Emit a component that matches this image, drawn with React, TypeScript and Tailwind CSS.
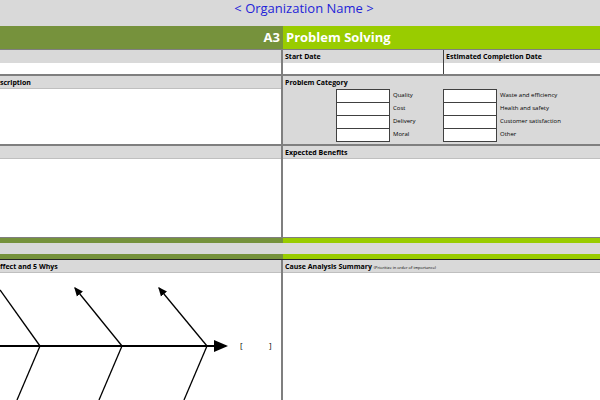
export default function App() {
  const f = { fontFamily: '"Open Sans","Noto Sans",sans-serif' };
  const cats1 = ["Quality", "Cost", "Delivery", "Moral"];
  const cats2 = ["Waste and efficiency", "Health and safety", "Customer satisfaction", "Other"];
  return (
    <div className="w-[600px] h-[400px] overflow-hidden bg-white text-black" style={f}>
      <div className="h-[26px] bg-[#d9d9d9] flex justify-center pl-[8px] items-start pt-[0px]">
        <span className="text-[13px] text-[#2323d8] leading-[16px]" style={{ fontFamily: '"Open Sans",sans-serif' }}>&lt; Organization Name &gt;</span>
      </div>
      <div className="h-[24px] flex border-b border-[#7f7f7f]">
        <div className="w-[283px] bg-[#76923c] flex justify-end items-center pr-[3px] text-white font-bold text-[13px]">A3</div>
        <div className="flex-1 bg-[#99cc00] flex items-center pl-[3px] text-white font-bold text-[13px]">Problem Solving</div>
      </div>
      <div className="flex h-[26px] border-b-2 border-[#7f7f7f]">
        <div className="w-[283px] border-r-2 border-[#7f7f7f] flex flex-col">
          <div className="h-[13px] bg-[#d9d9d9]" />
          <div className="flex-1 bg-white" />
        </div>
        <div className="w-[161px] border-r border-[#404040] flex flex-col">
          <div className="h-[13px] bg-[#d9d9d9] text-[7px] font-bold leading-[13px] pl-[2px]">Start Date</div>
          <div className="flex-1 bg-white" />
        </div>
        <div className="flex-1 flex flex-col">
          <div className="h-[13px] bg-[#d9d9d9] text-[7px] font-bold leading-[13px] pl-[2px]">Estimated Completion Date</div>
          <div className="flex-1 bg-white" />
        </div>
      </div>
      <div className="flex h-[70px] border-b-2 border-[#7f7f7f]">
        <div className="w-[283px] border-r-2 border-[#7f7f7f] flex flex-col">
          <div className="h-[13px] bg-[#d9d9d9] text-[7px] font-bold leading-[13px] border-b border-[#bfbfbf]">scription</div>
          <div className="flex-1 bg-white" />
        </div>
        <div className="flex-1 bg-[#d9d9d9]">
          <div className="h-[13px] text-[7px] font-bold leading-[13px] pl-[2px]">Problem Category</div>
          <div className="flex pl-[53px]">
            <div className="w-[107px]">
              {cats1.map((c) => (
                <div key={c} className="flex h-[13px]">
                  <div className="w-[54px] bg-white border border-[#404040] -mb-px" />
                  <span className="text-[6px] leading-[13px] pl-[3px]">{c}</span>
                </div>
              ))}
            </div>
            <div>
              {cats2.map((c) => (
                <div key={c} className="flex h-[13px]">
                  <div className="w-[54px] bg-white border border-[#404040] -mb-px" />
                  <span className="text-[6px] leading-[13px] pl-[3px]">{c}</span>
                </div>
              ))}
            </div>
          </div>
        </div>
      </div>
      <div className="flex h-[91px]">
        <div className="w-[283px] border-r-2 border-[#7f7f7f] flex flex-col">
          <div className="h-[13px] bg-[#d9d9d9] border-b border-[#bfbfbf]" />
          <div className="flex-1 bg-white" />
        </div>
        <div className="flex-1 flex flex-col">
          <div className="h-[13px] bg-[#d9d9d9] text-[7px] font-bold leading-[13px] pl-[2px] border-b border-[#bfbfbf]">Expected Benefits</div>
          <div className="flex-1 bg-white" />
        </div>
      </div>
      <div className="h-[6px] flex border-t border-[#7f7f7f]">
        <div className="w-[283px] bg-[#76923c]" />
        <div className="flex-1 bg-[#99cc00]" />
      </div>
      <div className="h-[11px] bg-[#d9d9d9]" />
      <div className="h-[6px] flex border-b border-[#262626]">
        <div className="w-[283px] bg-[#76923c]" />
        <div className="flex-1 bg-[#99cc00]" />
      </div>
      <div className="flex h-[140px]">
        <div className="w-[283px] border-r-2 border-[#7f7f7f] flex flex-col">
          <div className="h-[13px] bg-[#d9d9d9] text-[7px] font-bold leading-[13px] border-b border-[#bfbfbf]">ffect and 5 Whys</div>
          <div className="flex-1 bg-white relative">
            <svg width="283" height="127" className="absolute inset-0">
              <defs>
                <marker id="a" markerWidth="8" markerHeight="8" refX="6" refY="4" orient="auto">
                  <path d="M0,1 L7,4 L0,7 Z" fill="#000" />
                </marker>
              </defs>
              <g stroke="#000" strokeWidth="1.3" fill="none">
                <line x1="0" y1="73" x2="226" y2="73" strokeWidth="2" markerEnd="url(#a)" />
                <line x1="40" y1="73" x2="0" y2="17" />
                <line x1="122" y1="73" x2="75" y2="15" markerEnd="url(#a)" />
                <line x1="207" y1="73" x2="159" y2="15" markerEnd="url(#a)" />
                <line x1="40" y1="73" x2="17" y2="127" />
                <line x1="122" y1="73" x2="99" y2="127" />
                <line x1="207" y1="73" x2="184" y2="127" />
              </g>
              <text x="240" y="75" fontSize="8">[</text>
              <text x="269" y="75" fontSize="8">]</text>
            </svg>
          </div>
        </div>
        <div className="flex-1 flex flex-col">
          <div className="h-[13px] bg-[#d9d9d9] text-[7px] font-bold leading-[13px] pl-[2px] border-b border-[#bfbfbf]">
            Cause Analysis Summary <span className="text-[4px] font-normal">(Prioritize in order of importance)</span>
          </div>
          <div className="flex-1 bg-white" />
        </div>
      </div>
    </div>
  );
}
